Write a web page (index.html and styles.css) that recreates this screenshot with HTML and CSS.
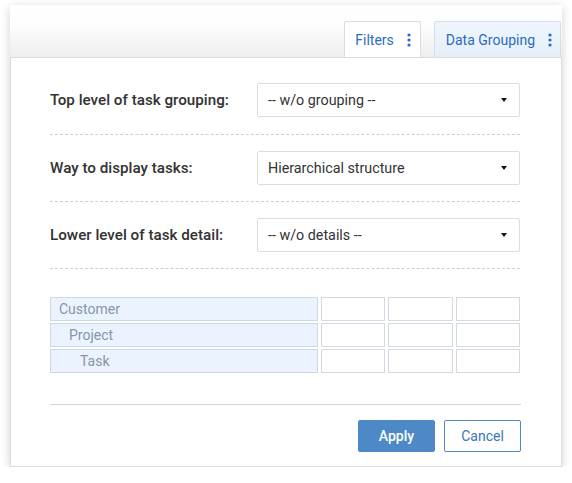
FILE: index.html
```html
<!DOCTYPE html>
<html lang="en">
<head>
<meta charset="utf-8">
<title>Data Grouping</title>
<link rel="stylesheet" href="styles.css">
</head>
<body>
<div class="frame">
  <div class="toolbar">
    <button class="tbtn">Filters
      <svg class="kebab" width="4" height="14" viewBox="0 0 4 14"><circle cx="2" cy="2" r="1.6"/><circle cx="2" cy="7" r="1.6"/><circle cx="2" cy="12" r="1.6"/></svg>
    </button>
    <button class="tbtn active">Data Grouping
      <svg class="kebab" width="4" height="14" viewBox="0 0 4 14"><circle cx="2" cy="2" r="1.6"/><circle cx="2" cy="7" r="1.6"/><circle cx="2" cy="12" r="1.6"/></svg>
    </button>
  </div>
  <div class="panel">
    <div class="row">
      <div class="label">Top level of task grouping:</div>
      <div class="select"><span>-- w/o grouping --</span><i class="caret"></i></div>
    </div>
    <div class="row">
      <div class="label">Way to display tasks:</div>
      <div class="select"><span>Hierarchical structure</span><i class="caret"></i></div>
    </div>
    <div class="row">
      <div class="label">Lower level of task detail:</div>
      <div class="select"><span>-- w/o details --</span><i class="caret"></i></div>
    </div>
    <div class="preview">
      <div class="name l0">Customer</div><div class="cell"></div><div class="cell"></div><div class="cell"></div>
      <div class="name l1">Project</div><div class="cell"></div><div class="cell"></div><div class="cell"></div>
      <div class="name l2">Task</div><div class="cell"></div><div class="cell"></div><div class="cell"></div>
    </div>
    <div class="actions">
      <button class="btn primary">Apply</button>
      <button class="btn secondary">Cancel</button>
    </div>
  </div>
</div>
</body>
</html>
```
FILE: styles.css
```css
* { box-sizing: border-box; }
body {
  margin: 0;
  background: #fff;
  font-family: Roboto, "Liberation Sans", sans-serif;
}
.frame {
  margin: 5px 10px 0;
  width: 552px;
  box-shadow: 0 2px 9px rgba(0,0,0,0.18);
}
.toolbar {
  height: 52px;
  background: linear-gradient(#ffffff 0%, #fdfdfd 40%, #eeeeee 100%);
  display: flex;
  justify-content: flex-end;
  align-items: flex-end;
  gap: 13px;
  padding-right: 1px;
}
.tbtn {
  height: 36px;
  display: flex;
  align-items: center;
  padding: 0 9px 0 10px;
  font-family: inherit;
  font-size: 14px;
  color: #2a6cbf;
  background: #fff;
  border: 1px solid #dcdcdc;
  border-bottom: none;
  border-radius: 2px 2px 0 0;
}
.tbtn .kebab { fill: #2a6cbf; margin-left: 13px; }
.tbtn.active {
  background: linear-gradient(#eef5fd, #e6eff9);
  border-color: #d4dde8;
  padding: 0 8px 0 11px;
}
.panel {
  border: 1px solid #dcdcdc;
  background: #fff;
  padding: 9px 41px 14px 39px;
  height: 410px;
}
.row {
  display: flex;
  align-items: center;
  padding: 16px 0 16px;
  border-bottom: 1px dashed #c6d0dc;
}
.row:first-child { padding-bottom: 17px; }
.label {
  width: 207px;
  font-family: "Roboto Medium", Roboto, "Liberation Sans", sans-serif;
  font-size: 15.2px;
  font-weight: 500;
  color: #333;
}
.select {
  width: 263px;
  height: 34px;
  border: 1px solid #dddddd;
  border-radius: 2px;
  display: flex;
  align-items: center;
  justify-content: space-between;
  padding: 0 12px 0 10px;
  font-size: 14.3px;
  color: #333;
}
.caret {
  width: 0;
  height: 0;
  border-left: 3.5px solid transparent;
  border-right: 3.5px solid transparent;
  border-top: 4px solid #111;
}
.preview {
  margin-top: 28px;
  display: grid;
  grid-template-columns: 268px 1fr 1fr 1fr;
  grid-auto-rows: 24px;
  column-gap: 3px;
  row-gap: 2px;
}
.name {
  background: #ebf4fe;
  border: 1px solid #cdd8e6;
  font-size: 14px;
  color: #8595ad;
  display: flex;
  align-items: center;
}
.l0 { padding-left: 8px; }
.l1 { padding-left: 18px; }
.l2 { padding-left: 29px; }
.cell {
  border: 1px solid #d3d9e2;
  background: #fff;
}
.actions {
  margin-top: 31px;
  border-top: 1px solid #cfd6e0;
  padding-top: 15px;
  display: flex;
  justify-content: flex-end;
  gap: 9px;
  margin-right: -1px;
}
.btn {
  width: 77px;
  height: 32px;
  border-radius: 2px;
  font-family: inherit;
  font-size: 14px;
}
.primary {
  background: #4d89c7;
  border: 1px solid #4d89c7;
  color: #fff;
  font-weight: 500;
}
.secondary {
  background: #fff;
  border: 1px solid #4d89c7;
  color: #3876bd;
}
```
